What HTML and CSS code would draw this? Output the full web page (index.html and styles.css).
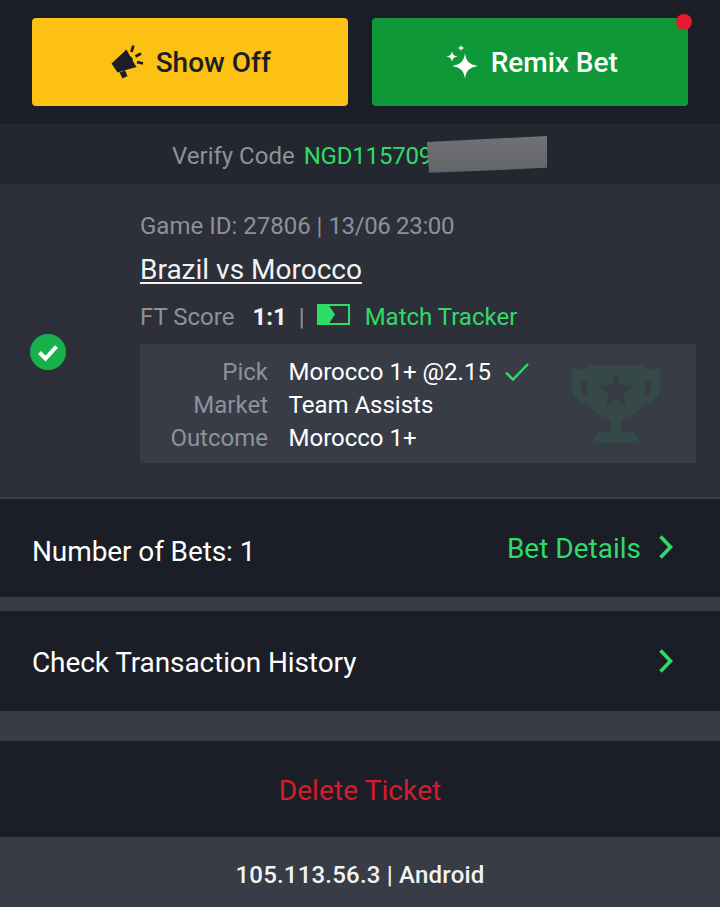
FILE: index.html
```html
<!DOCTYPE html>
<html>
<head>
<meta charset="utf-8">
<title>Bet Ticket</title>
<link rel="stylesheet" href="styles.css">
</head>
<body>
<div class="actions">
	<a class="btn btn_yellow">
		<svg class="btn_icon" width="36" height="36" viewBox="0 0 36 36"><path d="M0.500 19.500 15.500 5.500C19 12 22 18 25.500 23L6.500 28.500Z" fill="#1b1e26"/><path d="M8.500 28.500 14 26.500 16.500 32 11.500 34.500Z" fill="#1b1e26"/><path d="M17.500 13C20 11.500 22.500 14 21.500 17.500 19.800 16.500 18.500 15 17.500 13Z" fill="#1b1e26"/><path d="M20.500 8 22.300 1.500M24.500 12.500 30 9.500M26 18 32 19.500" stroke="#1b1e26" stroke-width="2.800" fill="none"/></svg>
		<span>Show Off</span>
	</a>
	<a class="btn btn_green">
		<svg class="btn_icon" width="34" height="36" viewBox="0 0 34 36"><path d="M20 9C21 17 24 20.500 33 22 24 23.500 21 27 20 35 19 27 16 23.500 7 22 16 20.500 19 17 20 9Z" fill="#fff"/><path d="M7 7C7.500 10.500 9 12 13 12.500 9 13 7.500 14.500 7 18 6.500 14.500 5 13 1 12.500 5 12 6.500 10.500 7 7Z" fill="#fff"/><path d="M16 0.500C16.300 2.800 17 3.500 19.500 4 17 4.500 16.300 5.200 16 7.500 15.700 5.200 15 4.500 12.500 4 15 3.500 15.700 2.800 16 0.500Z" fill="#fff"/></svg>
		<span>Remix Bet</span>
		<i class="red_dot"></i>
	</a>
</div>

<div class="verify">
	<span class="verify_label">Verify Code</span>
	<span class="verify_code">NGD115709</span>
	<i class="smudge"></i>
</div>

<div class="card">
	<div class="card_status">
		<svg width="36" height="36" viewBox="0 0 36 36"><circle cx="18" cy="18" r="18" fill="#16b14b"/><path d="M9.500 18.500 15.500 24.500 26.500 12.500" stroke="#fff" stroke-width="4" fill="none"/></svg>
	</div>
	<div class="card_main">
		<div class="game_id">Game ID: 27806 | <span class="game_time">13/06 23:00</span></div>
		<div class="teams">Brazil vs Morocco</div>
		<div class="score">
			<span class="score_label">FT Score</span>
			<b class="score_val">1:1</b>
			<span class="score_sep">|</span>
			<svg class="tracker" width="33" height="21" viewBox="0 0 33 21"><rect x="1" y="1" width="31" height="19" fill="none" stroke="#2fdc68" stroke-width="2"/><path d="M0 0H11L18 10.500 11 21H0Z" fill="#2fdc68"/></svg>
			<span class="tracker_text">Match Tracker</span>
		</div>
		<div class="pick_box">
			<svg class="trophy" width="88" height="78" viewBox="0 0 88 78"><path fill-rule="evenodd" d="M15 0H73V4H88V22C88 32 80 38 71 40 66 48 58 52 49 54V67H62L68 78H20L26 67H39V54C30 52 22 48 17 40 8 38 0 32 0 22V4H15ZM9 17V27C9 29 12 31 15 32V15H10ZM79 17V27C79 29 76 31 73 32V15H78ZM44 7 48 20H62L51 29 55 42 44 34 33 42 37 29 26 20H40Z" fill="#354a48"/></svg>
			<div class="pick_row">
				<span class="pick_label">Pick</span>
				<span class="pick_val">Morocco 1+ @2.15</span>
				<svg class="pick_check" width="26" height="20" viewBox="0 0 26 20"><path d="M2 10.500 9 17.500 24 2" stroke="#2fdc68" stroke-width="2.400" fill="none"/></svg>
			</div>
			<div class="pick_row">
				<span class="pick_label">Market</span>
				<span class="pick_val">Team Assists</span>
			</div>
			<div class="pick_row">
				<span class="pick_label">Outcome</span>
				<span class="pick_val">Morocco 1+</span>
			</div>
		</div>
	</div>
</div>

<div class="row row_bets">
	<span class="row_text">Number of Bets: 1</span>
	<a class="row_link">
		<span>Bet Details</span>
		<svg class="chevron" width="16" height="24" viewBox="0 0 16 24"><path d="M2.500 1.500 12.500 12 2.500 22.500" stroke="#2fdc68" stroke-width="3.600" fill="none"/></svg>
	</a>
</div>
<div class="row row_history">
	<span class="row_text">Check Transaction History</span>
	<a class="row_link">
		<svg class="chevron" width="16" height="24" viewBox="0 0 16 24"><path d="M2.500 1.500 12.500 12 2.500 22.500" stroke="#2fdc68" stroke-width="3.600" fill="none"/></svg>
	</a>
</div>
<div class="delete">Delete Ticket</div>
<div class="foot">105.113.56.3 | Android</div>
</body>
</html>
```
FILE: styles.css
```css
*{ margin:0; padding:0; box-sizing:border-box;}
html,body{ height:907px; overflow:hidden;}
body{ width:720px; background:#383c47; font-family:Roboto,"Liberation Sans",sans-serif; color:#fff;}
a{ text-decoration:none;}
i{ display:block;}

.actions{ height:124px; background:#1b1e26; padding:18px 32px; display:flex; gap:24px;}
.btn{ position:relative; flex:1; height:88px; border-radius:4px; display:flex; align-items:center; justify-content:center; font-size:28px; font-weight:500;}
.btn_yellow{ background:#fdc113; color:#1b1e26; gap:9px; padding-left:2px;}
.btn_green{ background:#0f9838; color:#fff; gap:12px; padding-left:3px;}
.btn_icon{ flex:none;}
.red_dot{ position:absolute; right:-4px; top:-4px; width:16px; height:16px; border-radius:50%; background:#e51a2e;}

.verify{ position:relative; height:60px; background:#232730; padding:4px 0 0 172px; display:flex; align-items:center; gap:9px; font-size:24px;}
.verify_label{ color:#8e9199;}
.verify_code{ color:#2fdc68; letter-spacing:-0.2px;}
.smudge{ position:absolute; left:427px; top:12px; width:120px; height:37px; background:linear-gradient(#707174,#656669 94%,#3f4d72); clip-path:polygon(0 6px,100% 0,100% 86%,2px 100%);}

.card{ height:315px; background:#2d3039; border-bottom:2px solid #383c47; padding:0 24px 0 30px; display:flex;}
.card_status{ width:110px; padding-top:150px;}
.card_main{ flex:1; padding-top:26px;}
.game_id{ height:32px; line-height:32px; font-size:24px; color:#8e9199;}
.game_time{ letter-spacing:-0.35px;}
.teams{ margin-top:12px; height:32px; line-height:32px; font-size:28px; text-decoration:underline; text-underline-offset:3px; color:#f2f3f5;}
.score{ margin-top:15px; height:32px; display:flex; align-items:center; font-size:24px;}
.score_label{ color:#8e9199;}
.score_val{ margin-left:18px; font-weight:700; color:#f2f3f5;}
.score_sep{ margin-left:12px; color:#8e9199;}
.tracker{ margin-left:12px; margin-top:-5px;}
.tracker_text{ margin-left:15px; color:#2fdc68;}

.pick_box{ position:relative; margin-top:11px; height:119px; background:#383c47; padding-top:11px;}
.trophy{ position:absolute; left:432px; top:21px;}
.pick_row{ position:relative; height:33px; display:flex; align-items:center; font-size:24px;}
.pick_label{ width:128px; text-align:right; color:#8e9199;}
.pick_val{ margin-left:20.5px; color:#fff;}
.pick_check{ margin-left:13.5px;}

.row{ background:#1b1e26; padding:0 46px 0 32px; display:flex; align-items:center; justify-content:space-between; font-size:28px;}
.row_text{ letter-spacing:-0.1px;}
.row_bets{ height:98px; padding-top:6px;}
.row_history{ height:100px; margin-top:14px; padding-top:2px;}
.row_link{ display:flex; align-items:center; gap:17px; color:#2fdc68; font-size:28px; margin-top:-6px;}
.chevron{ margin-top:-2px;}
.row_history .row_link{ margin-top:0;}
.delete{ height:96px; margin-top:30px; padding-top:2px; background:#1b1e26; color:#d31d2c; font-size:28px; letter-spacing:0.1px; display:flex; align-items:center; justify-content:center;}
.foot{ height:70px; padding-top:6px; display:flex; align-items:center; justify-content:center; font-size:24px; letter-spacing:0.2px; font-weight:500; color:#f2f3f5;}
```
